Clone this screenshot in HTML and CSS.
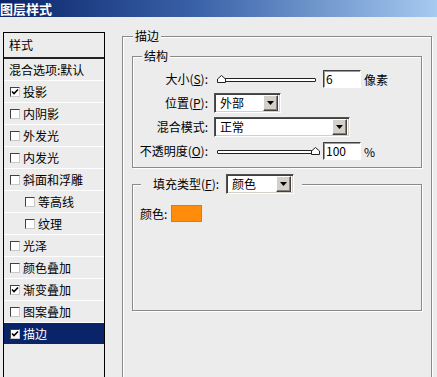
FILE: index.html
```html
<!DOCTYPE html>
<html>
<head>
<meta charset="utf-8">
<link rel="stylesheet" href="styles.css">
</head>
<body>
<div class="titlebar"><span class="title">图层样式</span></div>
<div class="main">
  <div class="styles-panel">
    <div class="panel-header">样式</div>
    <div class="row plain">混合选项:默认</div>
    <div class="row"><span class="cb"><svg viewBox="0 0 8 8"><path d="M1 3.5 L3 5.5 L7 1.5" /></svg></span>投影</div>
    <div class="row"><span class="cb"></span>内阴影</div>
    <div class="row"><span class="cb"></span>外发光</div>
    <div class="row"><span class="cb"></span>内发光</div>
    <div class="row"><span class="cb"></span>斜面和浮雕</div>
    <div class="row sub"><span class="cb"></span>等高线</div>
    <div class="row sub"><span class="cb"></span>纹理</div>
    <div class="row"><span class="cb"></span>光泽</div>
    <div class="row"><span class="cb"></span>颜色叠加</div>
    <div class="row"><span class="cb"><svg viewBox="0 0 8 8"><path d="M1 3.5 L3 5.5 L7 1.5" /></svg></span>渐变叠加</div>
    <div class="row"><span class="cb"></span>图案叠加</div>
    <div class="row selected"><span class="cb"><svg viewBox="0 0 8 8"><path d="M1 3.5 L3 5.5 L7 1.5" /></svg></span>描边</div>
  </div>

  <fieldset class="group outer">
    <legend class="legend outer-legend">描边</legend>
    <fieldset class="group inner">
      <legend class="legend inner-legend">结构</legend>
      <div class="form">
        <label class="lbl">大小(<u>S</u>):</label>
        <div class="ctrl">
          <div class="slider">
            <div class="track track-size"></div>
            <svg class="thumb thumb-left" viewBox="0 0 9 8"><path d="M0.5 7.5 V4 L4.5 0.5 L8.5 4 V7.5 Z"/></svg>
          </div>
          <div class="field">6</div>
          <span class="unit">像素</span>
        </div>

        <label class="lbl">位置(<u>P</u>):</label>
        <div class="ctrl">
          <div class="dropdown dd-small"><span class="dd-text">外部</span><span class="dd-btn"><svg viewBox="0 0 7 4"><path d="M0 0 H7 L3.5 4 Z"/></svg></span></div>
        </div>

        <label class="lbl">混合模式:</label>
        <div class="ctrl">
          <div class="dropdown dd-wide"><span class="dd-text">正常</span><span class="dd-btn"><svg viewBox="0 0 7 4"><path d="M0 0 H7 L3.5 4 Z"/></svg></span></div>
        </div>

        <label class="lbl">不透明度(<u>O</u>):</label>
        <div class="ctrl">
          <div class="slider">
            <div class="track track-opacity"></div>
            <svg class="thumb thumb-right" viewBox="0 0 9 8"><path d="M0.5 7.5 V4 L4.5 0.5 L8.5 4 V7.5 Z"/></svg>
          </div>
          <div class="field">100</div>
          <span class="unit">%</span>
        </div>
      </div>
    </fieldset>

    <fieldset class="group fill">
      <legend class="legend fill-legend">
        <span class="fill-label">填充类型(<u>F</u>):</span>
        <div class="dropdown dd-fill"><span class="dd-text">颜色</span><span class="dd-btn"><svg viewBox="0 0 7 4"><path d="M0 0 H7 L3.5 4 Z"/></svg></span></div>
      </legend>
      <div class="color-row"><span>颜色:</span><span class="swatch"></span></div>
    </fieldset>
  </fieldset>
</div>
</body>
</html>
```

FILE: styles.css
```css
* { box-sizing: border-box; }
html, body { margin: 0; padding: 0; }
body {
  width: 437px;
  height: 377px;
  overflow: hidden;
  background: #ececec;
  font-family: "Noto Sans CJK SC", "Noto Sans", sans-serif;
  font-size: 12px;
  color: #000;
}
u { text-decoration: underline; text-underline-offset: 1px; }

.titlebar {
  height: 17px;
  background: linear-gradient(to right, #0a246a 0%, #3a62a8 45%, #a6caf0 100%);
  display: flex;
  align-items: center;
  overflow: hidden;
}
.title {
  color: #fff;
  font-weight: bold;
  font-size: 13px;
  line-height: 17px;
  margin-left: 0;
}

.main {
  display: flex;
  align-items: flex-start;
  height: 360px;
  overflow: hidden;
}

/* left list */
.styles-panel {
  margin: 15px 0 0 3px;
  width: 102px;
  height: 350px;
  border: 1px solid #000;
  border-bottom: none;
  background: #ececec;
}
.panel-header {
  height: 26px;
  border-bottom: 2px solid #222;
  padding-left: 5px;
  display: flex;
  align-items: center;
  line-height: 1;
}
.row {
  height: 22px;
  border-bottom: 1px solid #fff;
  display: flex;
  align-items: center;
  padding-left: 6px;
  line-height: 1;
  white-space: nowrap;
}
.row.plain { padding-left: 5px; }
.row.sub { padding-left: 21px; }
.row.selected { background: #0a246a; color: #fff; border-bottom-color: #ececec; }
.cb {
  width: 10px;
  height: 10px;
  margin-right: 3px;
  background: #fff;
  border: 1px solid;
  border-color: #404040 #c8c8c8 #c8c8c8 #404040;
  display: flex;
  align-items: center;
  justify-content: center;
  flex: none;
}
.cb svg { width: 8px; height: 8px; display: block; }
.cb svg path { fill: none; stroke: #000; stroke-width: 1.6; }

/* group boxes */
.group {
  border: 1px solid #8a8a8a;
  box-shadow: inset 1px 1px 0 #fff, 1px 1px 0 #fff;
  margin: 0;
  padding: 0;
  min-width: 0;
}
.legend {
  font-size: 12px;
  line-height: 14px;
  background: #ececec;
  padding: 0 2px;
}
.outer {
  margin: 12px 0 0 17px;
  width: 310px;
  height: 370px;
}
.outer-legend { margin-left: 10px; }

.inner {
  margin: 6px 0 0 9px;
  width: 290px;
  padding: 6px 0 6px 0;
}
.inner-legend { margin-left: 9px; }

.form {
  display: grid;
  grid-template-columns: 75px auto;
  column-gap: 6px;
  row-gap: 4px;
  align-items: center;
}
.lbl {
  justify-self: end;
  white-space: nowrap;
  line-height: 20px;
}
.ctrl {
  height: 20px;
  display: flex;
  align-items: center;
}

/* slider */
.slider {
  position: relative;
  width: 106px;
  height: 20px;
  margin-right: 3px;
}
.track {
  position: absolute;
  top: 9px;
  height: 4px;
  border: 1px solid #222;
  background: #fff;
  border-radius: 1px;
}
.track-size { left: 7px; width: 95px; }
.track-opacity { left: 3px; width: 97px; }
.thumb {
  position: absolute;
  top: 6px;
  width: 9px;
  height: 8px;
}
.thumb path { fill: #fff; stroke: #222; stroke-width: 1; }
.thumb-left { left: 3px; }
.thumb-right { left: 97px; }

.field {
  width: 38px;
  height: 18px;
  background: #fff;
  border: 1px solid;
  border-color: #404040 #fff #fff #404040;
  box-shadow: inset 1px 1px 0 #9a9a9a;
  padding-left: 2px;
  line-height: 16px;
}
.unit { margin-left: 3px; }

/* dropdown */
.dropdown {
  height: 20px;
  background: #fff;
  border: 1px solid;
  border-color: #505050 #fff #fff #505050;
  box-shadow: inset 1px 1px 0 #404040, inset -1px -1px 0 #d4d0c8;
  display: flex;
  align-items: center;
  padding-left: 5px;
  padding-right: 2px;
}
.dd-text { flex: 1; line-height: 16px; }
.dd-btn {
  width: 15px;
  height: 16px;
  background: #d4d0c8;
  border: 1px solid;
  border-color: #fff #404040 #404040 #fff;
  box-shadow: inset -1px -1px 0 #808080;
  display: flex;
  align-items: center;
  justify-content: center;
}
.dd-btn svg { width: 7px; height: 4px; display: block; }
.dd-btn svg path { fill: #000; }
.dd-small { width: 67px; }
.dd-wide { width: 136px; }
.dd-fill { width: 68px; margin-left: 7px; }

/* fill box */
.fill {
  margin: 6px 0 0 9px;
  width: 290px;
  height: 137px;
}
.fill-legend {
  display: flex;
  align-items: center;
  margin-left: 8px;
  padding: 0 8px 0 12px;
  line-height: 20px;
}
.fill-label { white-space: nowrap; }
.color-row {
  display: flex;
  align-items: center;
  margin-top: 11px;
  padding-left: 7px;
  height: 17px;
}
.swatch {
  width: 31px;
  height: 17px;
  margin-left: 4px;
  background: #ff8c0a;
  border: 1px solid #8c8c8c;
}
```
